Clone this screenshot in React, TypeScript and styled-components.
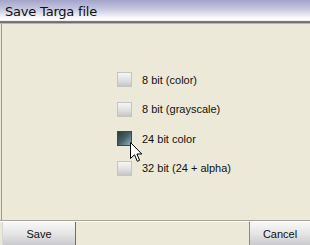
import React from 'react';
import styled, { createGlobalStyle } from 'styled-components';

const GlobalStyle = createGlobalStyle`
  html, body {
    margin: 0;
    padding: 0;
    background: #ece9d8;
  }
  body {
    font-family: 'Liberation Sans', Arial, sans-serif;
  }
`;

const Window = styled.div`
  width: 310px;
  height: 245px;
  display: flex;
  flex-direction: column;
  background: #ece9d8;
  overflow: hidden;
  position: relative;
`;

const TitleBar = styled.div`
  height: 20px;
  display: flex;
  align-items: center;
  padding: 2px 0 0 5px;
  box-sizing: border-box;
  background: linear-gradient(to bottom, #a3a3cb 0%, #c6c6de 45%, #ffffff 95%);
  font-family: 'DejaVu Sans', 'Liberation Sans', sans-serif;
  font-size: 13px;
  color: #101010;
  letter-spacing: -0.2px;
`;

const TitleRule = styled.div`
  height: 4px;
  box-sizing: border-box;
  background: #ffffff;
  border-top: 1px solid #f0f0f0;
  border-bottom: 1px solid #b4b4b4;
  box-shadow: inset 0 -1px 0 #6e6e6e, inset 0 -2px 0 #7a7a7a;
`;

const Body = styled.div`
  flex: 1;
  border-left: 1px solid #9a9a90;
  margin-left: 1px;
  display: flex;
  flex-direction: column;
  padding: 48px 0 0 115px;
`;

const OptionList = styled.div`
  display: flex;
  flex-direction: column;
  gap: 14.5px;
`;

const Option = styled.label`
  display: flex;
  align-items: center;
  height: 15px;
  font-size: 11px;
  color: #111;
  cursor: default;
`;

const Box = styled.span<{ $active?: boolean }>`
  width: 15px;
  height: 15px;
  box-sizing: border-box;
  margin-right: 10px;
  border: 1px solid ${({ $active }) => ($active ? '#3c4a50' : '#c4c4c0')};
  background: ${({ $active }) =>
    $active
      ? 'linear-gradient(135deg, #2e3a40 0%, #4a6068 50%, #8cb6c2 100%)'
      : 'linear-gradient(to bottom, #f6f6f6 0%, #dedede 60%, #c6c6c6 100%)'};
`;

const Footer = styled.div`
  display: flex;
  justify-content: space-between;
  border-top: 1px solid #a6a597;
  box-shadow: inset 0 1px 0 #ffffff;
  padding-top: 1px;
  height: 25px;
  box-sizing: border-box;
`;

const Button = styled.button<{ $width: number }>`
  width: ${({ $width }) => $width}px;
  height: 24px;
  margin: 0;
  padding: 0;
  border: none;
  border-left: 1px solid #6f6f6f;
  border-right: 1px solid #6f6f6f;
  background: linear-gradient(to bottom, #f8f8f8 0%, #e2e2e2 55%, #c8c8cc 100%);
  font-family: 'Liberation Sans', Arial, sans-serif;
  font-size: 11px;
  color: #111;
`;

const SaveButton = styled(Button)`
  margin-left: 2px;
  border-left-color: #d8d8d8;
`;

const CancelButton = styled(Button)`
  border-right: none;
  border-left-color: #8a8a8a;
`;

const Cursor = styled.svg`
  position: absolute;
  left: 130px;
  top: 142px;
  width: 13px;
  height: 21px;
`;

const options = ['8 bit (color)', '8 bit (grayscale)', '24 bit color', '32 bit (24 + alpha)'];

export default function App() {
  return (
    <Window>
      <GlobalStyle />
      <TitleBar>Save Targa file</TitleBar>
      <TitleRule />
      <Body>
        <OptionList>
          {options.map((label, i) => (
            <Option key={label}>
              <Box $active={i === 2} />
              {label}
            </Option>
          ))}
        </OptionList>
      </Body>
      <Footer>
        <SaveButton $width={74}>Save</SaveButton>
        <CancelButton $width={61}>Cancel</CancelButton>
      </Footer>
      <Cursor viewBox="0 0 13 21">
        <path
          d="M0.5 0.5 L0.5 16.5 L4.5 12.8 L7.3 19.3 L9.6 18.3 L6.9 12 L11.8 12 Z"
          fill="#ffffff"
          stroke="#000000"
          strokeWidth="1"
          strokeLinejoin="miter"
        />
      </Cursor>
    </Window>
  );
}
